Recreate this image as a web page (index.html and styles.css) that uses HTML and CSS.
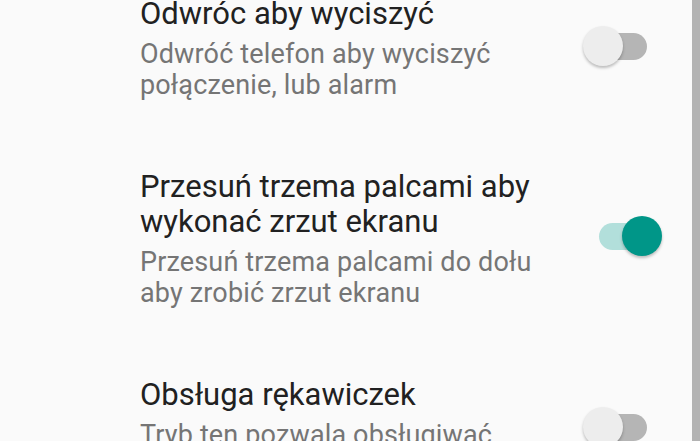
FILE: index.html
```html
<!DOCTYPE html>
<html>
<head>
    <meta charset="utf-8" />
    <title>Gesty</title>
    <link rel="stylesheet" href="styles.css">
</head>
<body>
    <div class="screen">
        <div class="list">
            <div class="row">
                <div class="texts">
                    <p class="title">Odwróc aby wyciszyć</p>
                    <p class="summary">Odwróć telefon aby wyciszyć połączenie, lub alarm</p>
                </div>
                <div class="switch">
                    <div class="track"></div>
                    <div class="thumb"></div>
                </div>
            </div>
            <div class="row">
                <div class="texts">
                    <p class="title">Przesuń trzema palcami aby wykonać zrzut ekranu</p>
                    <p class="summary">Przesuń trzema palcami do dołu aby zrobić zrzut ekranu</p>
                </div>
                <div class="switch on">
                    <div class="track"></div>
                    <div class="thumb"></div>
                </div>
            </div>
            <div class="row">
                <div class="texts">
                    <p class="title">Obsługa rękawiczek</p>
                    <p class="summary">Tryb ten pozwala obsługiwać telefon w rękawiczkach</p>
                </div>
                <div class="switch">
                    <div class="track"></div>
                    <div class="thumb"></div>
                </div>
            </div>
        </div>
        <div class="scrollbar"></div>
    </div>
</body>
</html>
```

FILE: styles.css
```css
body {
    font-family: Roboto, 'Noto Sans', sans-serif;
    margin: 0;
    background-color: #FAFAFA;
}
p {
    margin: 0;
}
.screen {
    display: flex;
    flex-direction: row;
    width: 700px;
    height: 441px;
    overflow: hidden;
}
.list {
    flex-grow: 1;
    margin-top: -38px;
}
.scrollbar {
    width: 8px;
    background-color: #B3B3B3;
}
.row {
    display: flex;
    flex-direction: row;
    align-items: center;
    padding: 34px 29px 34px 140px;
}
.texts {
    flex-grow: 1;
    width: 0;
}
.title {
    font-size: 31px;
    line-height: 35px;
    color: #212121;
}
.summary {
    font-size: 27px;
    line-height: 31px;
    letter-spacing: 0.15px;
    color: #757575;
    margin-top: 8px;
}
.switch {
    position: relative;
    width: 80px;
    height: 40px;
    margin-left: 20px;
    margin-bottom: 6px;
    flex-shrink: 0;
}
.track {
    position: absolute;
    left: 16px;
    top: 7px;
    width: 48px;
    height: 27px;
    border-radius: 14px;
    background-color: #B5B5B5;
}
.thumb {
    position: absolute;
    left: 0;
    top: 0;
    width: 40px;
    height: 40px;
    border-radius: 50%;
    background-color: #EDEDED;
    box-shadow: 0 2px 3px rgba(0, 0, 0, 0.25);
}
.on .track {
    background-color: #B2DFDB;
}
.on .thumb {
    left: 39px;
    background-color: #009688;
}
```
